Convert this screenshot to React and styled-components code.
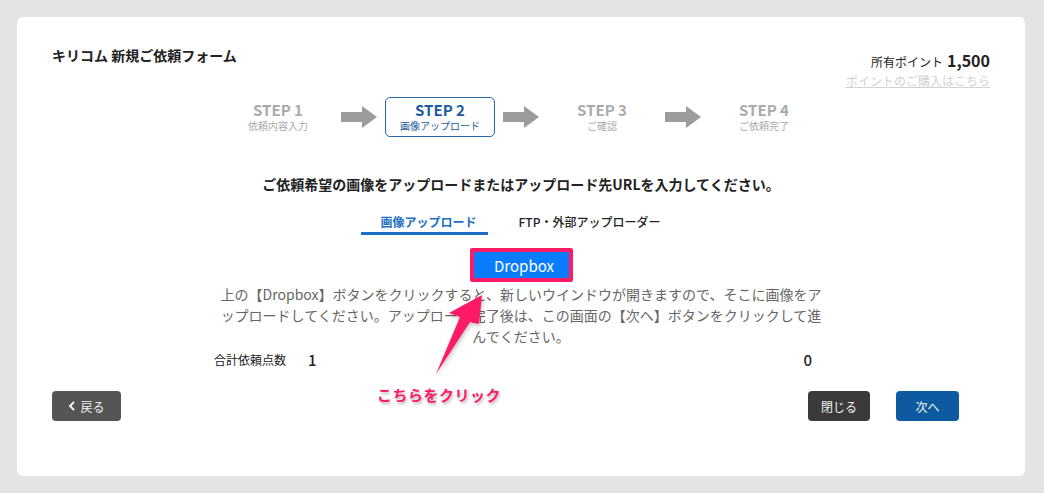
import React from 'react';
import styled, { createGlobalStyle } from 'styled-components';

const GlobalStyle = createGlobalStyle`
  body {
    margin: 0;
    background: #e4e4e4;
    font-family: "Noto Sans CJK JP", "Noto Sans", sans-serif;
    color: #222;
  }
`;

const Page = styled.div`
  padding: 17px 19px 17px 17px;
`;

const Card = styled.div`
  position: relative;
  background: #fff;
  border-radius: 6px;
  height: 459px;
  box-sizing: border-box;
  padding: 28px 35px 0;
`;

const Header = styled.div`
  display: flex;
  justify-content: space-between;
  align-items: flex-start;
`;

const Title = styled.h1`
  margin: 0;
  font-size: 14px;
  line-height: 20px;
  font-weight: 700;
`;

const Points = styled.div`
  margin-top: 4px;
  display: flex;
  flex-direction: column;
  align-items: flex-end;
`;

const PointLine = styled.div`
  font-size: 12px;
  line-height: 22px;
  b {
    font-size: 16px;
    margin-left: 4px;
  }
`;

const BuyLink = styled.a`
  font-size: 12px;
  line-height: 16px;
  color: #d2d2d2;
  text-decoration: underline;
`;

const Steps = styled.div`
  margin-top: 8px;
  display: flex;
  justify-content: center;
  align-items: center;
  gap: 8px;
`;

const Step = styled.div`
  width: 110px;
  height: 40px;
  box-sizing: border-box;
  display: flex;
  flex-direction: column;
  align-items: center;
  justify-content: center;
  border: 1.5px solid ${p => (p.$active ? '#2b67a8' : 'transparent')};
  border-radius: 5px;
  color: ${p => (p.$active ? '#1c5c9e' : '#aaa')};
`;

const StepLabel = styled.div`
  font-size: 15px;
  line-height: 18px;
  font-weight: 700;
`;

const StepSub = styled.div`
  font-size: 10px;
  line-height: 14px;
`;

const Heading = styled.h2`
  margin: 37px 0 0;
  text-align: center;
  font-size: 14px;
  line-height: 20px;
  font-weight: 700;
`;

const Tabs = styled.div`
  margin-top: 19px;
  display: flex;
  justify-content: center;
`;

const Tab = styled.div`
  padding: 0 ${p => p.$right}px 1px ${p => p.$left}px;
  font-size: 12px;
  line-height: 18px;
  font-weight: ${p => (p.$active ? 700 : 500)};
  color: ${p => (p.$active ? '#1a6fc4' : '#222')};
  border-bottom: 3px solid ${p => (p.$active ? '#1a6fc4' : 'transparent')};
`;

const DropWrap = styled.div`
  margin-top: 13px;
  display: flex;
  justify-content: center;
`;

const DropButton = styled.button`
  width: 103px;
  height: 34px;
  border: 3px solid #ff1a66;
  border-radius: 2px;
  background: #0a7cff;
  box-shadow: inset 0 0 0 1px #ff1a66;
  color: #fff;
  font-family: "Noto Sans CJK JP", "Noto Sans", sans-serif;
  font-size: 15px;
  padding: 0 0 0 6px;
`;

const Note = styled.p`
  margin: 2px auto 0;
  width: 640px;
  text-align: center;
  font-size: 14px;
  line-height: 21px;
  color: #666;
`;

const Total = styled.div`
  margin-top: 2px;
  display: flex;
  align-items: center;
  padding: 0 178px 0 162px;
  line-height: 22px;
`;

const TotalLabel = styled.span`
  font-size: 12px;
  width: 94px;
`;

const TotalValue = styled.span`
  font-size: 15px;
  font-weight: 500;
  flex: ${p => (p.$grow ? 1 : 'none')};
`;

const Buttons = styled.div`
  margin-top: 20px;
  padding-right: 31px;
  display: flex;
  align-items: center;
  gap: 26px;
`;

const Btn = styled.button`
  height: 30px;
  width: ${p => p.$w}px;
  border: none;
  border-radius: 4px;
  background: ${p => p.$bg};
  color: #f2f2f2;
  font-family: "Noto Sans CJK JP", "Noto Sans", sans-serif;
  font-size: 12px;
  display: flex;
  align-items: center;
  justify-content: center;
  gap: 4px;
  padding: 0;
`;

const Spacer = styled.div`
  flex: 1;
`;

const ArrowSvg = styled.svg`
  position: absolute;
  left: 400px;
  top: 270px;
  filter: drop-shadow(1px 2px 2px rgba(0, 0, 0, 0.25));
`;

const Callout = styled.div`
  position: absolute;
  left: 360px;
  top: 367px;
  font-size: 15px;
  font-weight: 700;
  color: #ff1a66;
  text-shadow: 1px 2px 3px rgba(0, 0, 0, 0.3);
  letter-spacing: 0.5px;
`;

function StepArrow() {
  return (
    <svg width="36" height="22" viewBox="0 0 36 22">
      <polygon points="0,6 21,6 21,0 36,11 21,22 21,16 0,16" fill="#9c9c9c" />
    </svg>
  );
}

const steps = [
  { label: 'STEP 1', sub: '依頼内容入力' },
  { label: 'STEP 2', sub: '画像アップロード', active: true },
  { label: 'STEP 3', sub: 'ご確認' },
  { label: 'STEP 4', sub: 'ご依頼完了' },
];

export default function App() {
  return (
    <>
      <GlobalStyle />
      <Page>
        <Card>
          <Header>
            <Title>キリコム 新規ご依頼フォーム</Title>
            <Points>
              <PointLine>
                所有ポイント<b>1,500</b>
              </PointLine>
              <BuyLink>ポイントのご購入はこちら</BuyLink>
            </Points>
          </Header>

          <Steps>
            {steps.map((s, i) => (
              <React.Fragment key={s.label}>
                {i > 0 && <StepArrow />}
                <Step $active={s.active}>
                  <StepLabel>{s.label}</StepLabel>
                  <StepSub>{s.sub}</StepSub>
                </Step>
              </React.Fragment>
            ))}
          </Steps>

          <Heading>ご依頼希望の画像をアップロードまたはアップロード先URLを入力してください。</Heading>

          <Tabs>
            <Tab $active $left={20} $right={11}>画像アップロード</Tab>
            <Tab $left={31} $right={21}>FTP・外部アップローダー</Tab>
          </Tabs>

          <DropWrap>
            <DropButton>Dropbox</DropButton>
          </DropWrap>

          <Note>
            上の【Dropbox】ボタンをクリックすると、新しいウインドウが開きますので、そこに画像をア
            <br />
            ップロードしてください。アップロード完了後は、この画面の【次へ】ボタンをクリックして進
            <br />
            んでください。
          </Note>

          <Total>
            <TotalLabel>合計依頼点数</TotalLabel>
            <TotalValue $grow>1</TotalValue>
            <TotalValue>0</TotalValue>
          </Total>

          <Buttons>
            <Btn $w={69} $bg="#555">
              <svg width="8" height="10" viewBox="0 0 8 10">
                <polyline points="6,1 2,5 6,9" fill="none" stroke="#fff" strokeWidth="1.8" />
              </svg>
              戻る
            </Btn>
            <Spacer />
            <Btn $w={62} $bg="#3a3a3a">閉じる</Btn>
            <Btn $w={63} $bg="#0d5aa0">次へ</Btn>
          </Buttons>

          <ArrowSvg width="100" height="120" viewBox="0 0 100 120">
            <polygon points="65,8 62,37 53,35 19,87 43,30 32,26" fill="#ff1a66" />
          </ArrowSvg>
          <Callout>こちらをクリック</Callout>
        </Card>
      </Page>
    </>
  );
}
